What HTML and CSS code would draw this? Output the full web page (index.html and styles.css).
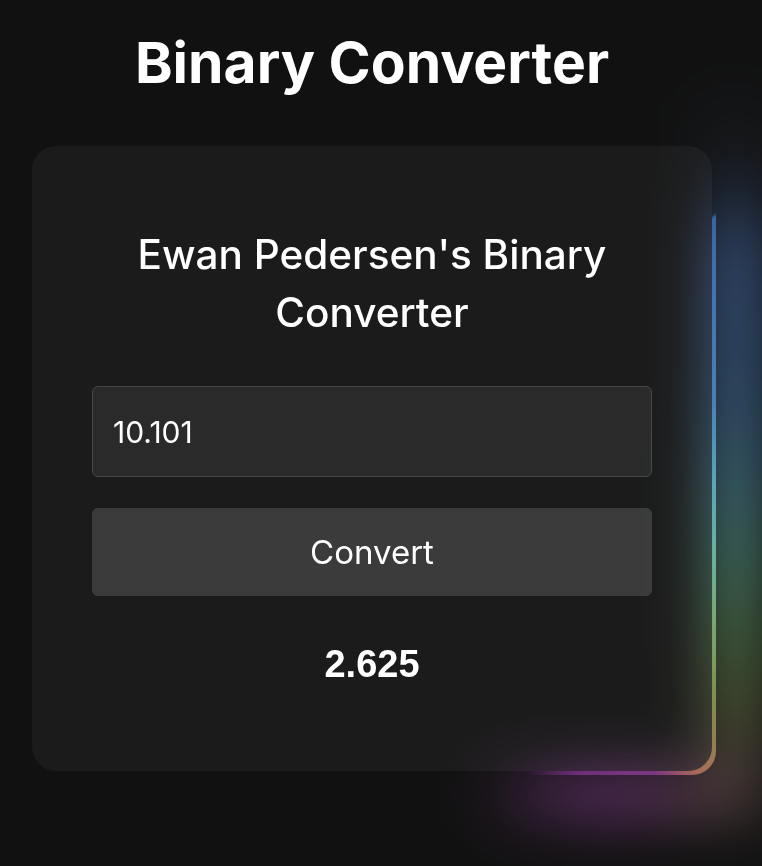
FILE: index.html
```html
<!DOCTYPE html>
<html lang="en">
<head>
<meta charset="utf-8">
<title>Binary Converter</title>
<link rel="stylesheet" href="styles.css">
</head>
<body>
<main class="page">
  <h1 class="title">Binary Converter</h1>
  <div class="stage">
    <div class="edge"></div>
    <section class="card">
      <h2 class="heading">Ewan Pedersen's Binary Converter</h2>
      <input class="field" type="text" value="10.101">
      <button class="btn" type="button">Convert</button>
      <p class="result">2.625</p>
    </section>
    <div class="glow"></div>
  </div>
</main>
</body>
</html>
```

FILE: styles.css
```css
html, body {
  margin: 0;
  padding: 0;
  background: #111111;
  height: 100%;
  overflow: hidden;
}

.page {
  width: 762px;
  height: 866px;
  font-family: "Inter", "Noto Sans", sans-serif;
  color: #ffffff;
}

.title {
  margin: 28px 0 0 32px;
  width: 680px;
  text-align: center;
  font-size: 57px;
  line-height: 70px;
  font-weight: 650;
  letter-spacing: 0;
}

.stage {
  position: relative;
  width: 680px;
  margin: 48px 0 0 32px;
}

.edge {
  position: absolute;
  inset: 0 -3.5px -3.5px 0;
  border-radius: 24px;
  background: conic-gradient(from 0deg at 50% 50%,
    rgba(47, 90, 152, 0) 0deg 54deg,
    #2c5490 54.5deg,
    #3668a0 80deg,
    #4690a0 94deg,
    #569a84 106deg,
    #64925c 115deg,
    #6a7c40 124deg,
    #84663e 131deg,
    #98563e 134deg,
    #66286c 138deg,
    #562262 147deg,
    rgba(86, 34, 98, 0) 154deg 360deg);
}

.card {
  position: relative;
  box-sizing: border-box;
  height: 625px;
  padding: 80px 60px 0;
  background: #1b1b1b;
  border-radius: 24px;
  display: flex;
  flex-direction: column;
  align-items: stretch;
}

.glow {
  position: absolute;
  inset: -44px -50px -50px -44px;
  border: 52px solid transparent;
  border-image: conic-gradient(from 0deg at 50% 50%,
    rgba(58, 104, 176, 0) 0deg 46deg,
    #3a64a8 58deg,
    #3a70a8 78deg,
    #4a90a8 94deg,
    #50a088 106deg,
    #5a8a50 118deg,
    #5e6a34 127deg,
    #5a4040 133deg,
    #6a2a70 139deg,
    #62266c 148deg,
    rgba(98, 38, 108, 0) 162deg 360deg) 1;
  filter: blur(28px);
  opacity: 0.7;
  mix-blend-mode: screen;
  pointer-events: none;
}

.heading {
  margin: 0;
  text-align: center;
  font-size: 40.5px;
  line-height: 58px;
  font-weight: 550;
}

.field {
  box-sizing: border-box;
  margin: 44px 0 0;
  height: 91px;
  width: 100%;
  padding: 0 20px;
  background: #2a2a2a;
  border: 1px solid #474747;
  border-radius: 6px;
  color: #ffffff;
  font-family: "Inter", "Noto Sans", sans-serif;
  font-size: 30px;
  outline: none;
}

.btn {
  box-sizing: border-box;
  margin: 31px 0 0;
  height: 88px;
  width: 100%;
  background: #3b3b3b;
  border: 0;
  border-radius: 6px;
  color: #ffffff;
  font-family: "Inter", "Noto Sans", sans-serif;
  font-size: 33px;
  font-weight: 400;
}

.result {
  margin: 46px 0 0;
  text-align: center;
  font-family: "Liberation Sans", Arial, sans-serif;
  font-weight: 700;
  font-size: 38px;
  line-height: 44px;
}
```
